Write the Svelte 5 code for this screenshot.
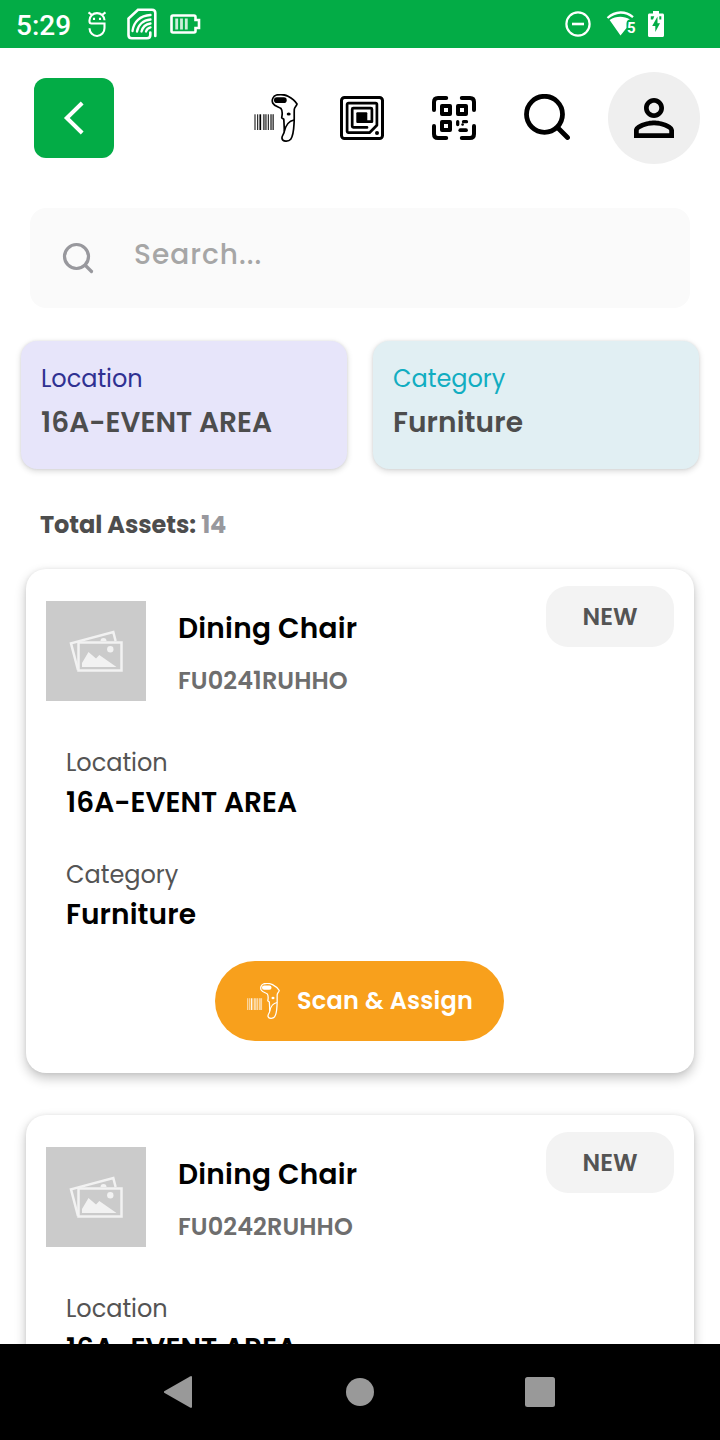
<script>
  const assets = [
    { name: 'Dining Chair', code: 'FU0241RUHHO', location: '16A-EVENT AREA', category: 'Furniture', status: 'NEW' },
    { name: 'Dining Chair', code: 'FU0242RUHHO', location: '16A-EVENT AREA', category: 'Furniture', status: 'NEW' }
  ];
</script>

{#snippet scanner(w, h)}
  <svg width={w} height={h} viewBox="0 0 44 48" fill="none" stroke="currentColor">
    <path d="M1 20.3v15.7M3.700 20.3v15.7M14.300 20.3v15.7" stroke-width="1" />
    <path d="M6.300 20.3v15.7" stroke-width="1.700" />
    <path d="M10.800 20.3v15.7M18 20.3v15.7" stroke-width="3.800" opacity=".45" />
    <path d="M9.700 20.3v15.7M12 20.3v15.7M17 20.3v15.7M19.500 20.3v15.7" stroke-width=".8" opacity=".6" />
    <path d="M22.500 1C26 .3 31 .6 34 2.200c3.500 1.800 7 4.300 9 7.800-.4 2.200-2.500 3-2.700 5.300-.3 4 .2 9-.3 15-.3 6-.8 11.500-3.300 15-2 2.500-8.200 2.700-8.700-1-.4-3 2.300-4 2.300-7 0-4-.3-8-.5-12l-2.100-1.500c.6-3 1-7-.7-9.300C25 12.800 20.500 12.500 18.700 9 17.500 6 19 2 22.500 1Z" stroke-width="1.700" stroke-linejoin="round" />
    <path d="M40 26c-5 1-8.500 6-9.700 11.500" stroke-width="1.400" />
    <rect x="20" y="3.300" width="12.700" height="5.700" rx="2.800" fill="currentColor" stroke="none" />
    <ellipse cx="34.700" cy="20" rx="2" ry="1.600" fill="currentColor" stroke="none" />
  </svg>
{/snippet}

<div class="screen">
  <div class="status">
    <div class="group">
      <span class="clock">5:29</span>
      <svg class="face" width="20" height="28" viewBox="0 0 20 28" fill="none" stroke="#fff" stroke-width="2.100">
        <path d="M17.500 10.300a7.500 7.200 0 0 0-15 0v1.200q0 2 2 2h13v4.500a7.500 7.800 0 0 1-15 .3M5 5 1.500 2.300M15 5l3.500-2.700" />
        <path d="M7 7.700v2.200M13 7.700v2.200" />
      </svg>
      <svg class="sim" width="32" height="32" viewBox="0 0 32 32" fill="none" stroke="#fff" stroke-linecap="round">
        <path d="M29.300 28V5c0-2-1.300-3.300-3.300-3.300H12L2.500 10.500V27c0 2 1.300 3.300 3.300 3.300H21c2.300 0 3.300-1.300 3.300-3.300v-2.500" stroke-width="2.600" />
        <path d="M6.500 23C7.500 14 14 7.500 24.500 7M11 23.500c1-6.500 6-11.500 13.500-12M15.500 23.500c1-4 4-7.200 9-8M20 23.500c.5-2 2-3.700 4.500-4.200" stroke-width="2.300" />
      </svg>
      <svg class="cell" width="31" height="20" viewBox="0 0 31 20" fill="none" stroke="#fff">
        <path d="M3 1.500h21c.9 0 1.500.6 1.500 1.500v3H29v8h-3.500v3c0 .9-.6 1.500-1.500 1.500H3c-.9 0-1.500-.6-1.500-1.500V3c0-.9.600-1.500 1.500-1.500Z" stroke-width="2.600" />
        <path d="M6.700 4.500v11M11.500 4.500v11M16.300 4.500v11" stroke-width="2.800" opacity=".8" />
      </svg>
    </div>
    <div class="group">
      <svg width="26" height="26" viewBox="0 0 26 26" fill="none" stroke="#fff" stroke-width="2.200">
        <circle cx="13" cy="13" r="11.600" />
        <path d="M7 13h12" stroke-width="2.600" />
      </svg>
      <svg class="wifi" width="30" height="26" viewBox="0 0 30 26">
        <path d="M1.500 7C9.500-.2 19.500-.2 27 6.200" fill="none" stroke="#fff" stroke-width="2.300" />
        <path d="M3.600 9C10 4.800 17.500 4.600 24 8.500c-2 0-3.500 1.500-3.500 4v4.500L14.500 24.500Z" fill="#fff" />
        <text x="21" y="22.300" class="five">5</text>
      </svg>
      <svg class="charge" width="16" height="26" viewBox="0 0 16 26">
        <path d="M5 0h6v2.500h3.500c.9 0 1.500.6 1.500 1.500v20.500c0 .9-.6 1.500-1.500 1.500h-13C.6 26 0 25.400 0 24.500V4c0-.9.600-1.500 1.500-1.500H5Z" fill="#fff" />
        <path d="M9.500 5.500 4.200 15H7.300v6L12 12.200H9.500ZM2.800 5.300h3.500L5 8.500H2.800ZM11.300 5.300h2v3.200h-2Z" fill="#03ac46" />
      </svg>
    </div>
  </div>

  <header class="topbar">
    <button class="back" aria-label="Back">
      <svg width="40" height="40" viewBox="0 0 40 40" fill="none" stroke="#fff" stroke-width="4">
        <path d="M28.200 5 12.800 20l15.400 15" />
      </svg>
    </button>
    <div class="tools">
      {@render scanner(44, 48)}
      <svg class="rfid" width="44" height="44" viewBox="0 0 44 44" fill="none" stroke="#000" stroke-width="2.700" stroke-linejoin="round" stroke-linecap="round">
        <rect x="1.500" y="1.500" width="41" height="41" rx="3" stroke-width="3" />
        <path d="M29.500 36.700H8.500c-.8 0-1.400-.6-1.400-1.400V8.500c0-.8.6-1.400 1.400-1.400h27c.8 0 1.400.6 1.400 1.400v20.700Z" />
        <path d="M27 31.400H13.300c-.7 0-1.100-.4-1.100-1.100v-17c0-.7.400-1.100 1.100-1.100h17.500c.7 0 1.100.4 1.100 1.100v12.400H26" />
        <rect x="16.300" y="16.300" width="11" height="10.700" rx="1" fill="#000" stroke="none" />
        <circle cx="37" cy="37" r="2" fill="#000" stroke="none" />
      </svg>
      <svg class="qr" width="44" height="44" viewBox="0 0 44 44" fill="none" stroke="#000" stroke-width="4" stroke-linejoin="round" stroke-linecap="round">
        <path d="M2 14V6q0-4 4-4h8.200M29.800 2H38q4 0 4 4v8M42 30v8q0 4-4 4h-8.200M14.200 42H6q-4 0-4-4v-8" />
        <path d="M10 10h8v8h-8zM26 10h8v8h-8zM10 26h8v8h-8z" />
        <path d="M25.700 25.700v2.800M31.500 25.700h3" stroke-width="3.300" />
        <path d="M28.300 34.200h5.700" stroke-width="3.800" />
        <path d="M30.500 28.500h.2" stroke-width="2.400" />
      </svg>
      <svg class="find" width="46" height="46" viewBox="0 0 46 46" fill="none" stroke="#000" stroke-width="4.800" stroke-linecap="round">
        <circle cx="20.500" cy="20.300" r="18" />
        <path d="m34 34 9.500 9.500" />
      </svg>
      <div class="avatar">
        <svg width="60" height="60" viewBox="0 0 24 24">
          <path d="M12 5.900c1.160 0 2.100.94 2.100 2.100s-.94 2.100-2.100 2.100S9.900 9.160 9.900 8s.94-2.100 2.100-2.100m0 9c2.970 0 6.100 1.460 6.100 2.100v1.100H5.900V17c0-.64 3.130-2.100 6.100-2.100M12 4C9.790 4 8 5.790 8 8s1.790 4 4 4 4-1.790 4-4-1.790-4-4-4zm0 9c-2.670 0-8 1.340-8 4v3h16v-3c0-2.660-5.330-4-8-4z" />
        </svg>
      </div>
    </div>
  </header>

  <div class="search">
    <svg width="32" height="32" viewBox="0 0 32 32" fill="none" stroke="#98989d" stroke-width="3.200" stroke-linecap="round">
      <circle cx="14.500" cy="14.500" r="12" />
      <path d="m23.500 23.500 6 6" />
    </svg>
    <span>Search...</span>
  </div>

  <div class="filters">
    <div class="filter location">
      <span class="label">Location</span>
      <span class="value">16A-EVENT AREA</span>
    </div>
    <div class="filter category">
      <span class="label">Category</span>
      <span class="value">Furniture</span>
    </div>
  </div>

  <div class="total">Total Assets: <span>14</span></div>

  <main class="list">
    {#each assets as asset}
      <article class="card">
        <div class="head">
          <svg class="thumb" width="100" height="100" viewBox="0 0 100 100" fill="none" stroke="#f2f2f2" stroke-width="2.500">
            <rect width="100" height="100" fill="#cbcbcb" stroke="none" />
            <path d="M32 69 25 42.300 67.300 31l2.300 9" />
            <path d="M54.500 40a3 3 0 0 1 6 0Z" fill="#f2f2f2" stroke="none" />
            <rect x="32.500" y="41.500" width="43" height="28" fill="#cbcbcb" />
            <circle cx="64.300" cy="48.300" r="3.200" fill="#f2f2f2" stroke="none" />
            <path d="M36 66v-4l6.500-11 7.500 6.500 3.300-3.500L70.500 66Z" fill="#f2f2f2" stroke="none" />
          </svg>
          <div class="title">
            <span class="name">{asset.name}</span>
            <span class="code">{asset.code}</span>
          </div>
          <span class="badge">{asset.status}</span>
        </div>
        <div class="fields">
          <div class="field">
            <span class="label">Location</span>
            <span class="value">{asset.location}</span>
          </div>
          <div class="field">
            <span class="label">Category</span>
            <span class="value wide">{asset.category}</span>
          </div>
        </div>
        <button class="assign">
          {@render scanner(33, 36)}
          <span>Scan &amp; Assign</span>
        </button>
      </article>
    {/each}
  </main>

  <nav class="keys">
    <svg width="32" height="36" viewBox="0 0 32 36" fill="#999"><path d="M.6 16.900 26 2.400Q28 1.400 28 3.400v29.200q0 2-2 1L.6 19.100q-1.600-1.100 0-2.200Z" /></svg>
    <svg width="32" height="36" viewBox="0 0 32 36" fill="#999"><circle cx="16" cy="18" r="14" /></svg>
    <svg width="32" height="36" viewBox="0 0 32 36" fill="#999"><rect x="1" y="3" width="30" height="30" rx="2.500" /></svg>
  </nav>
</div>

<style>
  :global(body) { background: #fff; overflow: hidden; }
  .screen {
    width: 720px;
    height: 1440px;
    display: flex;
    flex-direction: column;
    overflow: hidden;
    background: #fff;
    color: #000;
    font-family: Poppins, Inter, sans-serif;
  }
  svg { display: block; flex: none; }
  button { border: 0; font: inherit; }

  .status {
    flex: none;
    height: 48px;
    box-sizing: border-box;
    padding: 0 56px 0 16px;
    display: flex;
    align-items: center;
    justify-content: space-between;
    background: #03ac46;
    color: #fff;
  }
  .group { display: flex; align-items: center; }
  .clock { font: 500 28px/32px Roboto, sans-serif; width: 71px; margin-top: 3px; }
  .sim { margin-left: 18.500px; }
  .cell { margin-left: 12px; }
  .wifi { margin-left: 15px; }
  .charge { margin-left: 12px; }
  .five { font: 700 15px Roboto, sans-serif; fill: #fff; }

  .topbar {
    flex: none;
    height: 140px;
    box-sizing: border-box;
    padding: 0 20px 0 34px;
    display: flex;
    align-items: center;
    justify-content: space-between;
  }
  .back {
    width: 80px;
    height: 80px;
    padding: 0;
    display: flex;
    align-items: center;
    justify-content: center;
    border-radius: 12px;
    background: #03ac46;
  }
  .tools { display: flex; align-items: center; }
  .rfid { margin-left: 42px; }
  .qr { margin-left: 48px; }
  .find { margin-left: 48px; margin-top: -2px; }
  .avatar {
    width: 92px;
    height: 92px;
    margin-left: 38px;
    display: flex;
    align-items: center;
    justify-content: center;
    border-radius: 50%;
    background: #efefef;
  }

  .search {
    flex: none;
    height: 100px;
    box-sizing: border-box;
    margin: 20px 30px 0;
    padding: 0 32px;
    display: flex;
    align-items: center;
    gap: 40px;
    border-radius: 16px;
    background: #fafafa;
    color: #a6a6a6;
  }
  .search span { font-size: 28px; line-height: 42px; font-weight: 500; letter-spacing: 1px; padding-bottom: 7px; }

  .filters {
    flex: none;
    display: grid;
    grid-template-columns: 1fr 1fr;
    gap: 26px;
    margin: 33px 21px 0;
  }
  .filter {
    height: 128px;
    box-sizing: border-box;
    padding: 20px 20px 0;
    display: flex;
    flex-direction: column;
    gap: 5px;
    border-radius: 16px;
    box-shadow: 0 2px 6px rgba(0, 0, 0, .16), 0 0 3px rgba(0, 0, 0, .08);
  }
  .label { font-size: 24px; line-height: 36px; letter-spacing: -.03px; }
  .value { font-size: 28px; line-height: 42px; font-weight: 600; letter-spacing: .04px; }
  .filter .value { color: #4d4d4d; }
  .location { background: #e7e5fa; }
  .location .label { color: #2f3192; }
  .category { background: #e1eff3; }
  .category .label { color: #12adc1; }
  .category .value, .wide { letter-spacing: .13px; }

  .total {
    flex: none;
    margin: 38px 40px 26px;
    font-size: 24px;
    line-height: 36px;
    font-weight: 700;
    letter-spacing: -.06px;
    color: #4d4d4d;
  }
  .total span { color: #98989d; }

  .list {
    flex: 1;
    min-height: 0;
    display: flex;
    flex-direction: column;
    gap: 42px;
    margin-top: -20px;
    padding: 20px 26px 0;
    overflow: hidden;
  }
  .card {
    flex: none;
    height: 504px;
    box-sizing: border-box;
    padding: 32px 20px;
    display: flex;
    flex-direction: column;
    border-radius: 20px;
    background: #fff;
    box-shadow: 0 5px 12px rgba(0, 0, 0, .24), 0 0 4px rgba(0, 0, 0, .06);
  }
  .head { display: flex; align-items: flex-start; }
  .title { flex: 1; display: flex; flex-direction: column; gap: 13px; margin-bottom: -10px; padding: 7px 0 0 32px; }
  .name { font-size: 28px; line-height: 42px; font-weight: 600; letter-spacing: .25px; }
  .code { font-size: 24px; line-height: 36px; font-weight: 600; letter-spacing: .1px; color: #6e6e6e; }
  .badge {
    width: 128px;
    height: 61px;
    margin-top: -15px;
    display: flex;
    align-items: center;
    justify-content: center;
    border-radius: 22px;
    background: #f3f3f3;
    color: #545454;
    font-size: 24px;
    font-weight: 600;
  }
  .fields { display: flex; flex-direction: column; gap: 33px; padding: 44px 20px 25px; }
  .field { display: flex; flex-direction: column; gap: 1px; }
  .field .label { color: #545454; }
  .assign {
    align-self: center;
    width: 289px;
    height: 80px;
    margin-right: 1px;
    padding: 0;
    display: flex;
    align-items: center;
    justify-content: center;
    gap: 17px;
    border-radius: 40px;
    background: #f8a01c;
    color: #fff;
    font-size: 24px;
    font-weight: 600;
    letter-spacing: .2px;
  }
  .assign span { padding-bottom: 2px; margin-right: -1px; }

  .keys {
    flex: none;
    height: 96px;
    display: flex;
    align-items: center;
    justify-content: center;
    gap: 148px;
    background: #000;
    position: relative;
  }
</style>
